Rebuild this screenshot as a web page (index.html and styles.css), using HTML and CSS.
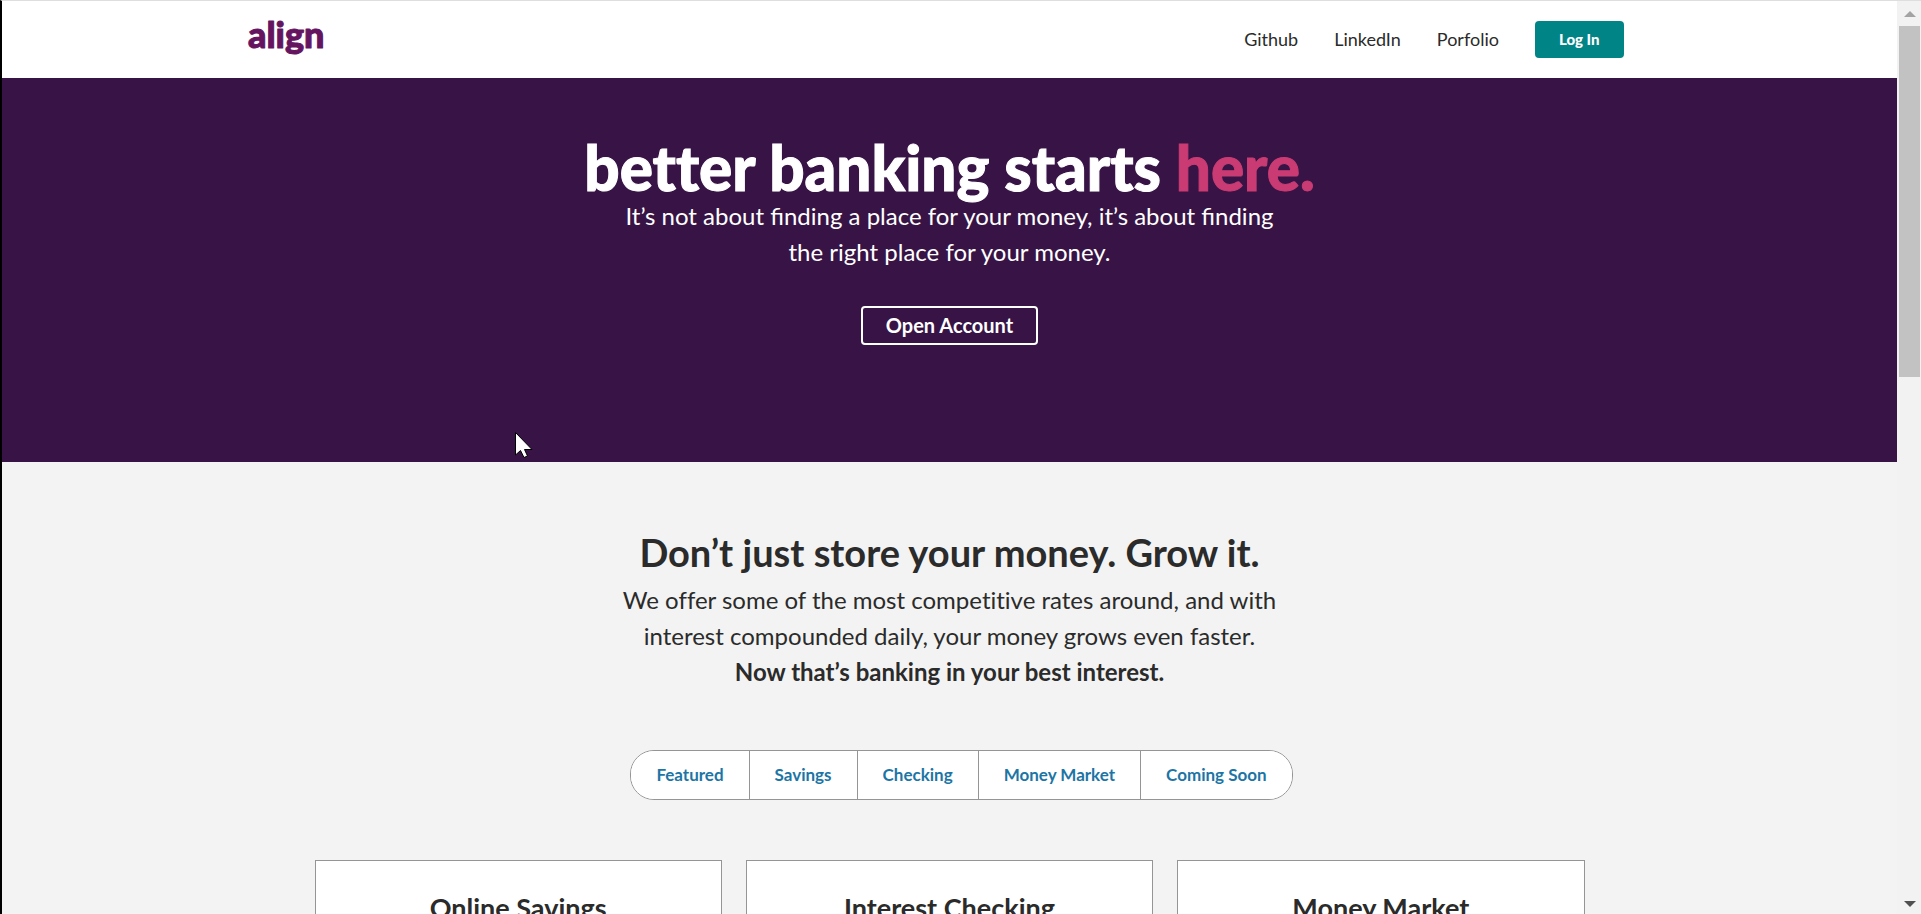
FILE: index.html
```html
<!DOCTYPE html>
<html lang="en">
<head>
<meta charset="utf-8">
<meta name="viewport" content="width=device-width, initial-scale=1">
<title>align</title>
<link rel="stylesheet" href="styles.css">
</head>
<body>
<div class="window">
  <div class="page">
    <header class="header">
      <div class="header-inner">
        <a class="logo" href="#" aria-label="align home">
          <svg width="78" height="50" viewBox="0 0 78 50" aria-hidden="true"><text class="wordmark" x="0" y="34">align</text></svg>
        </a>
        <nav class="nav">
          <a class="nav-link" href="#">Github</a>
          <a class="nav-link" href="#">LinkedIn</a>
          <a class="nav-link" href="#">Porfolio</a>
          <button class="login" type="button">Log In</button>
        </nav>
      </div>
    </header>
    <main>
      <section class="hero">
        <h1 class="hero-title">better banking starts <span class="accent">here.</span></h1>
        <p class="lead">It’s not about finding a place for your money, it’s about finding<br>the right place for your money.</p>
        <button class="open-account" type="button">Open Account</button>
      </section>
      <section class="rates">
        <h2 class="rates-title">Don’t just store your money. Grow it.</h2>
        <p class="lead">We offer some of the most competitive rates around, and with<br>interest compounded daily, your money grows even faster.<br><strong>Now that’s banking in your best interest.</strong></p>
        <div class="tabs">
          <button class="tab" type="button">Featured</button>
          <button class="tab" type="button">Savings</button>
          <button class="tab" type="button">Checking</button>
          <button class="tab" type="button">Money Market</button>
          <button class="tab" type="button">Coming Soon</button>
        </div>
        <div class="cards">
          <article class="card"><h3 class="card-title">Online Savings</h3></article>
          <article class="card"><h3 class="card-title">Interest Checking</h3></article>
          <article class="card"><h3 class="card-title">Money Market</h3></article>
        </div>
      </section>
    </main>
  </div>
  <div class="scrollbar" aria-hidden="true">
    <svg class="arrow" width="12" height="6" viewBox="0 0 12 6"><path d="M6 0l6 6H0z" fill="#a3a3a3"/></svg>
    <div class="track"><div class="thumb"></div></div>
    <svg class="arrow" width="12" height="6" viewBox="0 0 12 6"><path d="M0 0h12L6 6z" fill="#505050"/></svg>
  </div>
  <svg class="cursor" width="20" height="28" viewBox="0 0 20 28" aria-hidden="true"><path d="M1.500 1.500v22.500l5-4.500 3.500 7 3.500-1.500-3-6.500h7.500z" fill="#fff" stroke="#000" stroke-width="1"/></svg>
</div>
</body>
</html>
```
FILE: styles.css
```css
* { box-sizing: border-box; }

body {
  margin: 0;
  color: #2a2b2a;
  background: #f3f3f3;
  font-family: Lato, "Liberation Sans", sans-serif;
}

button { font-family: inherit; cursor: pointer; }
h1, h2, h3, p { margin: 0; }

.window {
  position: relative;
  display: flex;
  height: 100vh;
  overflow: hidden;
  border-top: 1px solid #dedede;
  border-left: 2px solid #000;
}

.page { flex: 1; min-width: 0; overflow: hidden; }

.header { background: #fff; }

.header-inner {
  display: flex;
  align-items: center;
  justify-content: space-between;
  max-width: 1424px;
  margin: 0 auto;
  padding: 13px 38px 14px 10px;
}

.logo { display: flex; text-decoration: none; }
.logo svg { overflow: visible; }
.wordmark {
  fill: #651460;
  stroke: #651460;
  stroke-width: 1px;
  stroke-linejoin: round;
  font-size: 36px;
  font-weight: 900;
}

.nav { display: flex; align-items: center; gap: 36px; }
.nav-link { color: #2a2b2a; font-size: 18px; line-height: 24px; text-decoration: none; }

.login {
  padding: 0 24px;
  border: 0;
  border-radius: 4px;
  color: #fff;
  background: #008486;
  font-size: 15px;
  font-weight: 900;
  line-height: 37px;
}

.hero {
  padding: 59px 24px 117px;
  color: #fff;
  background: #371445;
  text-align: center;
}

.hero-title {
  font-size: 62px;
  font-weight: 900;
  font-variant-ligatures: none;
  line-height: 61px;
  -webkit-text-stroke: 1px currentColor;
}
.accent { color: #ca3b74; -webkit-text-stroke-color: #ca3b74; }
.lead { font-size: 24px; line-height: 36px; }

.open-account {
  margin-top: 36px;
  padding: 0 23px;
  border: 2px solid #fff;
  border-radius: 4px;
  color: #fff;
  background: transparent;
  font-size: 20px;
  font-weight: 700;
  line-height: 35px;
}

.rates {
  padding: 65px 24px 0;
  font-variant-ligatures: none;
  text-align: center;
}
.rates-title { margin-bottom: 5px; font-size: 38px; font-weight: 700; line-height: 50px; }

.tabs {
  display: inline-flex;
  margin: 60px 0 60px 24px;
  overflow: hidden;
  border: 1px solid #959595;
  border-radius: 24px;
  background: #fff;
}

.tab {
  padding: 0 25px;
  border: 0;
  border-right: 1px solid #959595;
  color: #1c75a5;
  background: #fff;
  font-size: 17px;
  font-weight: 700;
  line-height: 48px;
}
.tab:last-child { border-right: 0; }

.cards {
  display: grid;
  grid-template-columns: repeat(3, 1fr);
  gap: 24px;
  max-width: 1270px;
  margin: 0 auto;
}

.card {
  min-height: 400px;
  padding: 31px 24px;
  border: 1px solid #959595;
  background: #fff;
}
.card-title { font-size: 27px; font-weight: 700; line-height: 32px; }

.scrollbar {
  display: flex;
  flex-direction: column;
  align-items: center;
  gap: 9px;
  width: 24px;
  padding: 10px 1px 7px 2px;
  background: #f2f2f2;
}
.arrow { flex: none; }
.track { flex: 1; width: 100%; }
.thumb { height: 40.5%; background: #c2c2c2; }

.cursor { position: absolute; top: 430px; left: 512px; }
```
